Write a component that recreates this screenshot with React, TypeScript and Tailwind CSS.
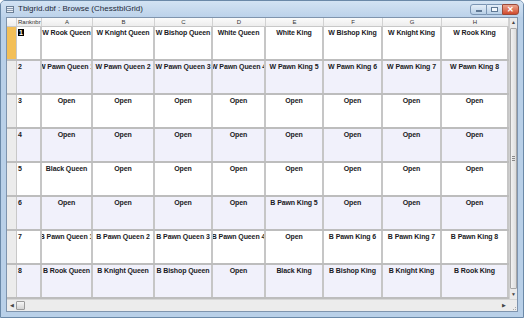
import React from "react";

const cols = [
  { key: "sel", w: 10 },
  { key: "Ranknbr", w: 25 },
  { key: "A", w: 51 },
  { key: "B", w: 62 },
  { key: "C", w: 58 },
  { key: "D", w: 53 },
  { key: "E", w: 58 },
  { key: "F", w: 59 },
  { key: "G", w: 59 },
  { key: "H", w: 67 },
];

const rows: string[][] = [
  ["W Rook Queen", "W Knight Queen", "W Bishop Queen", "White Queen", "White King", "W Bishop King", "W Knight King", "W Rook King"],
  ["W Pawn Queen 1", "W Pawn Queen 2", "W Pawn Queen 3", "W Pawn Queen 4", "W Pawn King 5", "W Pawn King 6", "W Pawn King 7", "W Pawn King 8"],
  ["Open", "Open", "Open", "Open", "Open", "Open", "Open", "Open"],
  ["Open", "Open", "Open", "Open", "Open", "Open", "Open", "Open"],
  ["Black Queen", "Open", "Open", "Open", "Open", "Open", "Open", "Open"],
  ["Open", "Open", "Open", "Open", "B Pawn King 5", "Open", "Open", "Open"],
  ["B Pawn Queen 1", "B Pawn Queen 2", "B Pawn Queen 3", "B Pawn Queen 4", "Open", "B Pawn King 6", "B Pawn King 7", "B Pawn King 8"],
  ["B Rook Queen", "B Knight Queen", "B Bishop Queen", "Open", "Black King", "B Bishop King", "B Knight King", "B Rook King"],
];

const font = { fontFamily: "'Liberation Sans', Arial, sans-serif" };

export default function App() {
  return (
    <div className="w-[524px] h-[318px] bg-[#b9d0e8] border border-[#6b89a8] rounded-t-[5px] flex flex-col overflow-hidden" style={font}>
      {/* title bar */}
      <div className="h-[17px] flex items-center pl-[5px] pr-[4px] bg-gradient-to-b from-[#d3e3f3] to-[#bcd2ea]">
        <div className="w-[8px] h-[7px] border border-[#6b7f96] bg-[#e9eef4] flex flex-col justify-between py-[1px] mr-[4px]">
          <div className="h-px bg-[#8a9bb0]" />
          <div className="h-px bg-[#8a9bb0]" />
        </div>
        <span className="text-[8px] leading-none text-[#1e2a3a]">Tblgrid.dbf : Browse (ChesstblGrid)</span>
        <div className="ml-auto flex items-center mt-[1px]">
          <div className="w-[17px] h-[11px] rounded-l-[3px] border border-[#7b95b3] bg-gradient-to-b from-[#e4eef8] to-[#b8cfe6] flex items-end justify-center pb-[2px]">
            <div className="w-[6px] h-[2px] bg-[#f4f8fc] border border-[#5f7894]" />
          </div>
          <div className="w-[15px] h-[11px] border-y border-[#7b95b3] bg-gradient-to-b from-[#e4eef8] to-[#b8cfe6] flex items-center justify-center">
            <div className="w-[7px] h-[5px] border border-[#5f7894] bg-[#f4f8fc]" />
          </div>
          <div className="w-[17px] h-[11px] rounded-r-[3px] border border-[#9a4a3a] bg-gradient-to-b from-[#eba48e] to-[#d0492c] flex items-center justify-center text-white text-[8px] font-bold leading-none">
            ✕
          </div>
        </div>
      </div>
      {/* body */}
      <div className="flex-1 flex px-[5px] pb-[5px]">
        <div className="flex-1 flex flex-col border border-[#7f94ad] bg-[#f0f0f0]">
          <div className="flex-1 flex min-h-0">
            {/* grid */}
            <div className="flex flex-col w-[502px] bg-white overflow-hidden">
              {/* header */}
              <div className="flex h-[9px] bg-gradient-to-b from-[#fbfbfb] to-[#ededed] border-b border-[#c8c8c8]">
                {cols.map((c, i) => (
                  <div
                    key={c.key}
                    style={{ width: c.w }}
                    className={`shrink-0 border-r border-[#d2d2d2] text-[6px] leading-[9px] text-[#333] whitespace-nowrap overflow-hidden ${i === 1 ? "pl-[1px]" : "text-center"}`}
                  >
                    {i === 0 ? "" : c.key}
                  </div>
                ))}
              </div>
              {rows.map((r, ri) => (
                <div key={ri} className={`flex h-[34px] border-b-2 border-[#bdbdbd] ${ri % 2 === 1 ? "bg-[#f1f1fb]" : "bg-white"}`}>
                  <div style={{ width: cols[0].w }} className={`shrink-0 border-r border-[#c8c8c8] ${ri === 0 ? "bg-[#f3bf57]" : "bg-[#ececec]"}`} />
                  <div style={{ width: cols[1].w }} className="shrink-0 border-r-2 border-[#c6c6c6] pl-[1px] pt-[1px] text-[7px] font-bold leading-[9px] text-[#1a1a24]">
                    {ri === 0 ? <span className="bg-black text-white px-[1px]">1</span> : ri + 1}
                  </div>
                  {r.map((t, ci) => (
                    <div
                      key={ci}
                      style={{ width: cols[ci + 2].w }}
                      className="shrink-0 border-r-2 border-[#c6c6c6] flex justify-center overflow-hidden pt-[1px] text-[7px] font-bold leading-[9px] tracking-[-0.1px] text-[#1a1a24] whitespace-nowrap"
                    >
                      <span className="shrink-0">{t}</span>
                    </div>
                  ))}
                </div>
              ))}
            </div>
            {/* vertical scrollbar */}
            <div className="flex-1 flex flex-col items-center bg-[#eaeaea] border-l border-[#d0d0d0]">
              <div className="h-[9px] flex items-center justify-center text-[5px] text-[#444] leading-none">▲</div>
              <div className="flex-1 w-[7px] my-[1px] rounded-[1px] border border-[#a8a8a8] bg-gradient-to-r from-[#f2f2f2] to-[#dcdcdc] flex items-center justify-center">
                <div className="w-[3px] flex flex-col gap-[1px]">
                  <div className="h-px bg-[#888]" />
                  <div className="h-px bg-[#888]" />
                  <div className="h-px bg-[#888]" />
                </div>
              </div>
              <div className="h-[9px] flex items-center justify-center text-[5px] text-[#444] leading-none">▼</div>
            </div>
          </div>
          {/* horizontal scrollbar */}
          <div className="h-[12px] flex items-center bg-[#ececec] border-t border-[#d6d6d6]">
            <div className="w-[9px] text-[5px] text-[#444] text-center leading-none">◀</div>
            <div className="w-[9px] h-[9px] rounded-[1px] border border-[#9a9a9a] bg-gradient-to-b from-[#f6f6f6] to-[#d4d4d4]" />
            <div className="flex-1" />
            <div className="w-[9px] text-[5px] text-[#444] text-center leading-none">▶</div>
            <div className="w-[9px] h-full flex items-end justify-end pr-[1px] pb-[1px]">
              <div className="grid grid-cols-2 gap-[1px]">
                <div className="w-px h-px" />
                <div className="w-px h-px bg-[#aaa]" />
                <div className="w-px h-px bg-[#aaa]" />
                <div className="w-px h-px bg-[#aaa]" />
              </div>
            </div>
          </div>
        </div>
      </div>
    </div>
  );
}
